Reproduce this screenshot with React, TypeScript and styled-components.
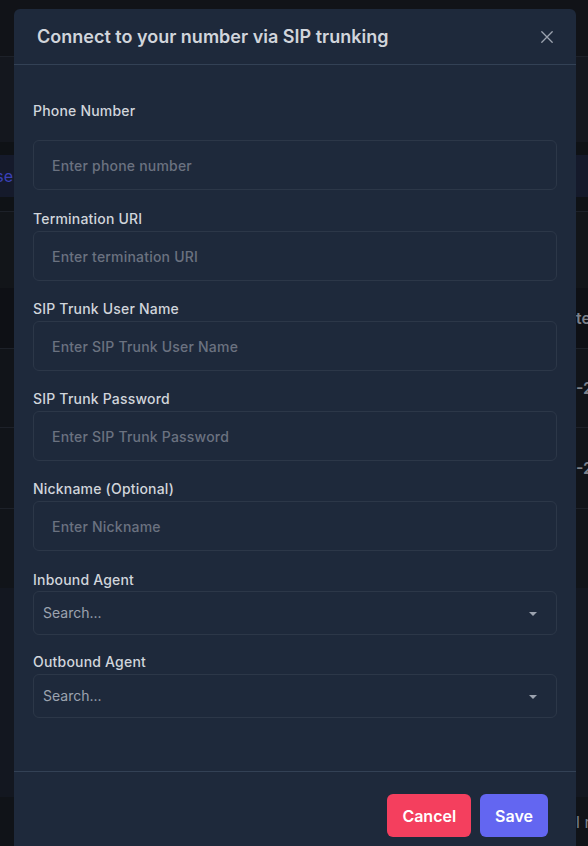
import React from "react";
import styled, { createGlobalStyle } from "styled-components";

const Global = createGlobalStyle`
  html, body { margin: 0; padding: 0; background: #111318; overflow: hidden; }
  * { box-sizing: border-box; }
  body { font-family: Inter, "Noto Sans", sans-serif; }
`;

const Page = styled.div`
  position: fixed;
  inset: 0;
  display: flex;
  flex-direction: column;
  background: #111318;
`;

const BgRow = styled.div<{ $h: number; $bg: string; $line?: boolean }>`
  height: ${(p) => p.$h}px;
  flex: none;
  background: ${(p) => p.$bg};
  border-top: ${(p) => (p.$line ? "1px solid #1d2129" : "none")};
  display: flex;
  align-items: center;
  justify-content: space-between;
  overflow: hidden;
  font-size: 16px;
`;

const LeftCell = styled.div`
  width: 13px;
  display: flex;
  justify-content: flex-end;
  overflow: hidden;
  white-space: nowrap;
  color: #3a41b8;
`;

const RightCell = styled.div<{ $weight?: number }>`
  width: 12px;
  overflow: hidden;
  white-space: nowrap;
  color: #7c818a;
  font-weight: ${(p) => p.$weight ?? 600};
`;

const Modal = styled.div`
  position: fixed;
  left: 14px;
  top: 9px;
  width: 562px;
  background: #1e293b;
  border-radius: 6px;
  display: flex;
  flex-direction: column;
`;

const Header = styled.div`
  height: 56px;
  padding: 0 23px;
  display: flex;
  align-items: center;
  justify-content: space-between;
  border-bottom: 1px solid #334155;
`;

const Title = styled.h2`
  margin: 0;
  font-size: 18px;
  font-weight: 600;
  color: #d1d5db;
`;

const Close = styled.button`
  background: none;
  border: none;
  padding: 0;
  width: 13px;
  height: 13px;
  display: flex;
  align-items: center;
  justify-content: center;
  color: #9ca3af;
`;

const Body = styled.div`
  padding: 36px 19px 53px;
  display: flex;
  flex-direction: column;
`;

const Field = styled.div<{ $gap: number; $after: number }>`
  display: flex;
  flex-direction: column;
  gap: ${(p) => p.$gap}px;
  margin-bottom: ${(p) => p.$after}px;
`;

const Label = styled.label`
  font-size: 14px;
  line-height: 20px;
  font-weight: 500;
  letter-spacing: 0.2px;
  color: #d1d5db;
`;

const Input = styled.input`
  height: 50px;
  width: 100%;
  background: #1e293b;
  border: 1px solid #2c3748;
  border-radius: 6px;
  padding: 0 18px;
  font-family: Inter, sans-serif;
  font-size: 14px;
  font-weight: 500;
  letter-spacing: 0.2px;
  color: #e5e7eb;
  outline: none;
  &::placeholder { color: #6b7280; }
`;

const Select = styled.div`
  height: 44px;
  border: 1px solid #2c3748;
  border-radius: 6px;
  padding: 0 19px 2px 9px;
  display: flex;
  align-items: center;
  justify-content: space-between;
  font-size: 14px;
  color: #9ca3af;
`;

const Caret = styled.span`
  width: 0;
  height: 0;
  border-left: 4px solid transparent;
  border-right: 4px solid transparent;
  border-top: 4px solid #9ca3af;
  margin-top: 3px;
`;

const Footer = styled.div`
  border-top: 1px solid #334155;
  padding: 22px 28px 16px;
  display: flex;
  justify-content: flex-end;
  gap: 9px;
`;

const Button = styled.button<{ $bg: string }>`
  height: 43px;
  padding: 0 15px;
  border: none;
  border-radius: 6px;
  background: ${(p) => p.$bg};
  color: #ffffff;
  font-family: Inter, sans-serif;
  font-size: 16px;
  font-weight: 600;
`;

const textFields = [
  { label: "Phone Number", ph: "Enter phone number", gap: 19, after: 19 },
  { label: "Termination URI", ph: "Enter termination URI", gap: 2, after: 18 },
  { label: "SIP Trunk User Name", ph: "Enter SIP Trunk User Name", gap: 2, after: 18 },
  { label: "SIP Trunk Password", ph: "Enter SIP Trunk Password", gap: 2, after: 18 },
  { label: "Nickname (Optional)", ph: "Enter Nickname", gap: 2, after: 19 },
];

export default function App() {
  return (
    <>
      <Global />
      <Page>
        <BgRow $h={56} $bg="#111318" />
        <BgRow $h={86} $bg="#14171e" $line />
        <BgRow $h={13} $bg="#0f1216" />
        <BgRow $h={42} $bg="#151a2b">
          <LeftCell>Purchase</LeftCell>
        </BgRow>
        <BgRow $h={14} $bg="#0f1216" />
        <BgRow $h={77} $bg="#121519" $line />
        <BgRow $h={60} $bg="#0e1015">
          <span />
          <RightCell>te</RightCell>
        </BgRow>
        <BgRow $h={79} $bg="#111419" $line>
          <span />
          <RightCell>-2</RightCell>
        </BgRow>
        <BgRow $h={81} $bg="#111419" $line>
          <span />
          <RightCell>-2</RightCell>
        </BgRow>
        <BgRow $h={80} $bg="#111419" $line />
        <BgRow $h={209} $bg="#131720" />
        <BgRow $h={49} $bg="#101318">
          <span />
          <RightCell $weight={400}>l r</RightCell>
        </BgRow>
      </Page>
      <Modal>
        <Header>
          <Title>Connect to your number via SIP trunking</Title>
          <Close aria-label="Close">
            <svg width="12" height="12" viewBox="0 0 12 12" fill="none">
              <path d="M0.8 0.8L11.2 11.2M11.2 0.8L0.8 11.2" stroke="currentColor" strokeWidth="1.3" strokeLinecap="round" />
            </svg>
          </Close>
        </Header>
        <Body>
          {textFields.map((f) => (
            <Field key={f.label} $gap={f.gap} $after={f.after}>
              <Label>{f.label}</Label>
              <Input placeholder={f.ph} />
            </Field>
          ))}
          <Field $gap={1} $after={17}>
            <Label>Inbound Agent</Label>
            <Select>
              <span>Search...</span>
              <Caret />
            </Select>
          </Field>
          <Field $gap={2} $after={0}>
            <Label>Outbound Agent</Label>
            <Select>
              <span>Search...</span>
              <Caret />
            </Select>
          </Field>
        </Body>
        <Footer>
          <Button $bg="#f43f5e">Cancel</Button>
          <Button $bg="#6366f1">Save</Button>
        </Footer>
      </Modal>
    </>
  );
}
